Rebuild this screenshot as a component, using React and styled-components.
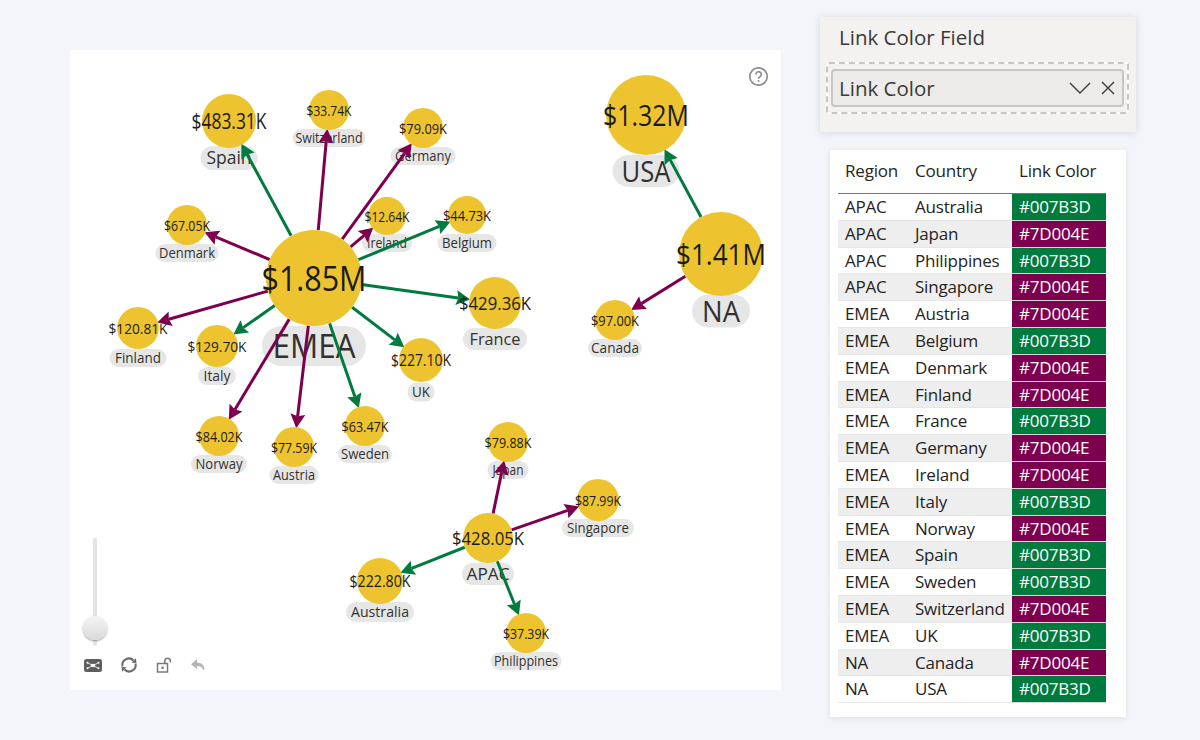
import React from 'react';
import styled, { createGlobalStyle } from 'styled-components';

const PURPLE = '#7D004E';
const GREEN = '#007B3D';

const GlobalStyle = createGlobalStyle`
  html, body { margin: 0; padding: 0; background: #f3f5fa; }
  body { font-family: "Open Sans", "Noto Sans", sans-serif; color: #252423; }
`;

const Page = styled.div`
  width: 1200px;
  height: 740px;
  display: flex;
  align-items: flex-start;
  overflow: hidden;
`;

const Canvas = styled.div`
  position: relative;
  width: 711px;
  height: 640px;
  margin: 50px 39px 0 70px;
  background: #fff;
`;

const Graph = styled.svg`
  display: block;
  width: 711px;
  height: 640px;
`;

const NodeText = styled.text`
  font-family: "Open Sans", "Noto Sans", sans-serif;
  text-anchor: middle;
  dominant-baseline: central;
  fill: ${p => p.$muted ? '#32312f' : '#1c1b1a'};
`;

const HelpIcon = styled.svg`
  position: absolute;
  top: 16px;
  left: 678px;
  width: 21px;
  height: 21px;
`;

const Slider = styled.div`
  position: absolute;
  left: 22.5px;
  top: 488px;
  width: 4px;
  height: 108px;
  background: #e4e4e4;
  border-radius: 2px;
`;

const Knob = styled.div`
  position: absolute;
  left: -10px;
  top: 78px;
  width: 24px;
  height: 24px;
  border-radius: 50%;
  background: linear-gradient(#f4f4f4, #dadada);
  box-shadow: 0 1px 2px rgba(0, 0, 0, 0.4);
`;

const Tools = styled.div`
  position: absolute;
  left: 14px;
  top: 606px;
  display: flex;
  gap: 18px;
  align-items: center;
`;

const ToolIcon = styled.svg`
  width: 18px;
  height: 18px;
  display: block;
  overflow: visible;
`;

const Side = styled.div`
  width: 316px;
  display: flex;
  flex-direction: column;
`;

const FilterCard = styled.div`
  margin-top: 17px;
  height: 115px;
  box-sizing: border-box;
  background: #f3f2f1;
  box-shadow: 0 1px 8px rgba(0, 0, 0, 0.12);
  padding: 7px 6px 0 6px;
`;

const FilterTitle = styled.div`
  font-size: 20.5px;
  line-height: 26px;
  padding-left: 13px;
  color: #3b3a39;
`;

const DropZone = styled.div`
  margin-top: 12px;
  height: 52px;
  width: 303px;
  box-sizing: border-box;
  border: 2px dashed #c8c6c4;
  background: linear-gradient(#f3f2f1, #f3f2f1) padding-box, #fff border-box;
  border-radius: 3px;
  padding: 5px 3px;
`;

const Field = styled.div`
  height: 38px;
  box-sizing: border-box;
  background: #edebe9;
  border: 2px solid #c8c6c4;
  border-radius: 4px;
  display: flex;
  align-items: center;
  padding: 0 7px 0 6px;
  font-size: 20.5px;
  color: #3b3a39;
`;

const FieldName = styled.span`
  flex: 1;
`;

const FieldIcon = styled.svg`
  display: block;
  margin-left: ${p => p.$gap}px;
`;

const TableCard = styled.div`
  margin: 18px 10px 0 10px;
  width: 296px;
  height: 567px;
  box-sizing: border-box;
  background: #fff;
  box-shadow: 0 1px 6px rgba(0, 0, 0, 0.1);
  padding: 0 20px 0 8px;
`;

const Table = styled.div`
  display: grid;
  grid-template-columns: 69px 105px 94px;
  font-size: 17px;
  letter-spacing: -0.012em;
`;

const HeadCell = styled.div`
  height: 43px;
  line-height: 42px;
  padding-left: ${p => p.$pad}px;
  border-bottom: 1px solid #118dff;
  box-sizing: content-box;
`;

const Cell = styled.div`
  height: 26.8px;
  line-height: 26px;
  box-sizing: border-box;
  padding-left: ${p => p.$pad}px;
  background: ${p => p.$alt ? '#eeeeee' : '#fff'};
  border-bottom: 1px solid #e6e6e6;
  white-space: nowrap;
`;

const ColorCell = styled(Cell)`
  background: ${p => p.$color};
  color: #fff;
  border-bottom: 1px solid #d8d8d8;
`;

const nodes = {
  EMEA: { x: 244, y: 228, r: 48, value: '$1.85M', vw: 105, vs: 34, ls: 33, lw: 83, ly: 296, pw: 104, ph: 40 },
  Spain: { x: 159, y: 71, r: 27, value: '$483.31K', vw: 75, vs: 21, ls: 19, lw: 45, ly: 108, pw: 57, ph: 24 },
  Switzerland: { x: 259, y: 60, r: 20, value: '$33.74K', vw: 45, vs: 15, ls: 14, lw: 67, ly: 88, pw: 73, ph: 18 },
  Germany: { x: 353, y: 78, r: 20, value: '$79.09K', vw: 48, vs: 15, ls: 14, lw: 56, ly: 106, pw: 65, ph: 18 },
  Denmark: { x: 117, y: 175, r: 20, value: '$67.05K', vw: 46, vs: 15, ls: 14, lw: 56, ly: 203, pw: 63, ph: 18 },
  Ireland: { x: 317, y: 166, r: 19, value: '$12.64K', vw: 45, vs: 15, ls: 14, lw: 40, ly: 193, pw: 50, ph: 18 },
  Belgium: { x: 397, y: 165, r: 19, value: '$44.73K', vw: 48, vs: 15, ls: 14, lw: 50, ly: 193, pw: 59, ph: 18 },
  France: { x: 425, y: 253, r: 26, value: '$429.36K', vw: 72, vs: 19, ls: 17, lw: 51, ly: 289, pw: 64, ph: 22 },
  Finland: { x: 68, y: 278, r: 21, value: '$120.81K', vw: 59, vs: 15, ls: 14, lw: 46, ly: 308, pw: 57, ph: 18 },
  Italy: { x: 147, y: 296, r: 21, value: '$129.70K', vw: 59, vs: 15, ls: 14, lw: 27, ly: 326, pw: 38, ph: 18 },
  UK: { x: 351, y: 310, r: 22, value: '$227.10K', vw: 60, vs: 15.5, ls: 14.5, lw: 18, ly: 342, pw: 27, ph: 19 },
  Norway: { x: 149, y: 386, r: 20, value: '$84.02K', vw: 47, vs: 15, ls: 14, lw: 47, ly: 414, pw: 56, ph: 18 },
  Austria: { x: 224, y: 397, r: 20, value: '$77.59K', vw: 46, vs: 15, ls: 14, lw: 42, ly: 425, pw: 49, ph: 18 },
  Sweden: { x: 295, y: 376, r: 20, value: '$63.47K', vw: 47, vs: 15, ls: 14, lw: 48, ly: 404, pw: 54, ph: 18 },
  USA: { x: 576, y: 65, r: 40, value: '$1.32M', vw: 86, vs: 29, ls: 29, lw: 49, ly: 121, pw: 67, ph: 32 },
  NA: { x: 651, y: 204, r: 42, value: '$1.41M', vw: 90, vs: 29, ls: 29, lw: 38, ly: 261, pw: 58, ph: 33 },
  Canada: { x: 545, y: 270, r: 20, value: '$97.00K', vw: 48, vs: 15, ls: 14, lw: 48, ly: 298, pw: 54, ph: 18 },
  APAC: { x: 418, y: 488, r: 25, value: '$428.05K', vw: 72, vs: 18, ls: 17, lw: 43, ly: 524, pw: 52, ph: 22 },
  Japan: { x: 438, y: 392, r: 20, value: '$79.88K', vw: 47, vs: 15, ls: 14, lw: 31, ly: 420, pw: 41, ph: 18 },
  Singapore: { x: 528, y: 450, r: 21, value: '$87.99K', vw: 46, vs: 15, ls: 14, lw: 62, ly: 478, pw: 72, ph: 18 },
  Australia: { x: 310, y: 531, r: 23, value: '$222.80K', vw: 61, vs: 16, ls: 15, lw: 58, ly: 562, pw: 68, ph: 20 },
  Philippines: { x: 456, y: 583, r: 20, value: '$37.39K', vw: 46, vs: 15, ls: 14, lw: 64, ly: 611, pw: 71, ph: 18 },
};

const links = [
  ['EMEA', 'Spain', GREEN],
  ['EMEA', 'Switzerland', PURPLE],
  ['EMEA', 'Germany', PURPLE],
  ['EMEA', 'Denmark', PURPLE],
  ['EMEA', 'Ireland', PURPLE],
  ['EMEA', 'Belgium', GREEN],
  ['EMEA', 'France', GREEN],
  ['EMEA', 'Finland', PURPLE],
  ['EMEA', 'Italy', GREEN],
  ['EMEA', 'UK', GREEN],
  ['EMEA', 'Norway', PURPLE],
  ['EMEA', 'Austria', PURPLE],
  ['EMEA', 'Sweden', GREEN],
  ['NA', 'USA', GREEN],
  ['NA', 'Canada', PURPLE],
  ['APAC', 'Japan', PURPLE],
  ['APAC', 'Singapore', PURPLE],
  ['APAC', 'Australia', GREEN],
  ['APAC', 'Philippines', GREEN],
];

const rows = [
  ['APAC', 'Australia', GREEN],
  ['APAC', 'Japan', PURPLE],
  ['APAC', 'Philippines', GREEN],
  ['APAC', 'Singapore', PURPLE],
  ['EMEA', 'Austria', PURPLE],
  ['EMEA', 'Belgium', GREEN],
  ['EMEA', 'Denmark', PURPLE],
  ['EMEA', 'Finland', PURPLE],
  ['EMEA', 'France', GREEN],
  ['EMEA', 'Germany', PURPLE],
  ['EMEA', 'Ireland', PURPLE],
  ['EMEA', 'Italy', GREEN],
  ['EMEA', 'Norway', PURPLE],
  ['EMEA', 'Spain', GREEN],
  ['EMEA', 'Sweden', GREEN],
  ['EMEA', 'Switzerland', PURPLE],
  ['EMEA', 'UK', GREEN],
  ['NA', 'Canada', PURPLE],
  ['NA', 'USA', GREEN],
];

const Link = ({ from, to, color }) => {
  const a = nodes[from];
  const b = nodes[to];
  const dx = b.x - a.x;
  const dy = b.y - a.y;
  const len = Math.hypot(dx, dy);
  const ux = dx / len;
  const uy = dy / len;
  const sx = a.x + ux * a.r;
  const sy = a.y + uy * a.r;
  const tx = b.x - ux * (b.r - 1);
  const ty = b.y - uy * (b.r - 1);
  const hx = tx - ux * 14;
  const hy = ty - uy * 14;
  const head = [
    [tx, ty],
    [hx - uy * 7.5, hy + ux * 7.5],
    [hx + ux * 2, hy + uy * 2],
    [hx + uy * 7.5, hy - ux * 7.5],
  ].map(p => p.join(',')).join(' ');
  return (
    <g>
      <line x1={sx} y1={sy} x2={hx + ux * 2} y2={hy + uy * 2} stroke={color} strokeWidth="3" />
      <polygon points={head} fill={color} />
    </g>
  );
};

export default function App() {
  const names = Object.keys(nodes);
  return (
    <Page>
      <GlobalStyle />
      <Canvas>
        <Graph viewBox="0 0 711 640">
          {names.map(name => {
            const n = nodes[name];
            return (
              <g key={name}>
                <rect
                  x={n.x - n.pw / 2}
                  y={n.ly - n.ph / 2}
                  width={n.pw}
                  height={n.ph}
                  rx={n.ph / 2}
                  fill="#e6e6e6"
                />
                <NodeText
                  $muted
                  x={n.x}
                  y={n.ly - 1}
                  fontSize={n.ls}
                  textLength={n.lw}
                  lengthAdjust="spacingAndGlyphs"
                >
                  {name}
                </NodeText>
              </g>
            );
          })}
          {links.map(([from, to, color]) => (
            <Link key={to} from={from} to={to} color={color} />
          ))}
          {names.map(name => {
            const n = nodes[name];
            return <circle key={name} cx={n.x} cy={n.y} r={n.r} fill="#edc430" />;
          })}
          {names.map(name => {
            const n = nodes[name];
            return (
              <NodeText
                key={name}
                x={n.x}
                y={n.y - 0.5}
                fontSize={n.vs}
                textLength={n.vw}
                lengthAdjust="spacingAndGlyphs"
              >
                {n.value}
              </NodeText>
            );
          })}
        </Graph>
        <HelpIcon viewBox="0 0 21 21">
          <circle cx="10.5" cy="10.5" r="8.7" fill="none" stroke="#8a8a8a" strokeWidth="1.7" />
          <path d="M7.9 8.4a2.7 2.7 0 1 1 4.2 2.2c-1 .7-1.6 1.1-1.6 2.2" fill="none" stroke="#8a8a8a" strokeWidth="1.6" />
          <circle cx="10.5" cy="15" r="1" fill="#8a8a8a" />
        </HelpIcon>
        <Slider>
          <Knob />
        </Slider>
        <Tools>
          <ToolIcon viewBox="0 0 18 18">
            <rect x="0" y="3" width="18" height="13" rx="2.5" fill="#5f5f5f" />
            <path d="M4 7 9 9.5 4 12M14 7 9 9.5 14 12" fill="none" stroke="#fff" strokeWidth="0.8" />
            <ellipse cx="9" cy="9.5" rx="2.2" ry="1.8" fill="#fff" />
            <circle cx="3.5" cy="6.8" r="1" fill="#fff" />
            <circle cx="3.5" cy="12.2" r="1" fill="#fff" />
            <circle cx="14.5" cy="6.8" r="1" fill="#fff" />
            <circle cx="14.5" cy="12.2" r="1" fill="#fff" />
          </ToolIcon>
          <ToolIcon viewBox="0 0 18 18">
            <path d="M2.5 10.5A6.5 6.5 0 0 1 13.5 4.5" fill="none" stroke="#6a6a6a" strokeWidth="2" />
            <path d="M15.5 7.5A6.5 6.5 0 0 1 4.5 13.5" fill="none" stroke="#6a6a6a" strokeWidth="2" />
            <path d="M11.5 6.8 16.5 7 15.8 2.2Z" fill="#6a6a6a" />
            <path d="M6.5 11.2 1.5 11 2.2 15.8Z" fill="#6a6a6a" />
          </ToolIcon>
          <ToolIcon viewBox="0 0 18 18">
            <rect x="1.5" y="7.5" width="10" height="8.5" fill="none" stroke="#7a7a7a" strokeWidth="1.5" />
            <rect x="5.5" y="10.5" width="2.2" height="2.6" fill="#7a7a7a" />
            <path d="M8.8 7.5V5a2.8 2.8 0 0 1 5.6 0v1.5" fill="none" stroke="#7a7a7a" strokeWidth="1.5" />
          </ToolIcon>
          <ToolIcon viewBox="0 0 18 18">
            <path
              transform="translate(-3 0)"
              d="M8 3 2 8.3 8 13V10c3 0 5 1 6 3.5.8 1 1.5.5 1.3-1C14.8 8.5 12 6.8 8 6.5Z"
              fill="#b4b4b4"
            />
          </ToolIcon>
        </Tools>
      </Canvas>
      <Side>
        <FilterCard>
          <FilterTitle>Link Color Field</FilterTitle>
          <DropZone>
            <Field>
              <FieldName>Link Color</FieldName>
              <FieldIcon $gap={0} width="22" height="14" viewBox="0 0 22 14">
                <path d="M1 2 11 12 21 2" fill="none" stroke="#3b3a39" strokeWidth="1.4" />
              </FieldIcon>
              <FieldIcon $gap={10} width="14" height="14" viewBox="0 0 14 14">
                <path d="M1 1 13 13M13 1 1 13" fill="none" stroke="#3b3a39" strokeWidth="1.4" />
              </FieldIcon>
            </Field>
          </DropZone>
        </FilterCard>
        <TableCard>
          <Table>
            <HeadCell $pad={7}>Region</HeadCell>
            <HeadCell $pad={8}>Country</HeadCell>
            <HeadCell $pad={7}>Link Color</HeadCell>
            {rows.map(([region, country, color], i) => (
              <React.Fragment key={country}>
                <Cell $pad={7} $alt={i % 2 === 1}>{region}</Cell>
                <Cell $pad={8} $alt={i % 2 === 1}>{country}</Cell>
                <ColorCell $pad={7} $color={color}>{color}</ColorCell>
              </React.Fragment>
            ))}
          </Table>
        </TableCard>
      </Side>
    </Page>
  );
}
